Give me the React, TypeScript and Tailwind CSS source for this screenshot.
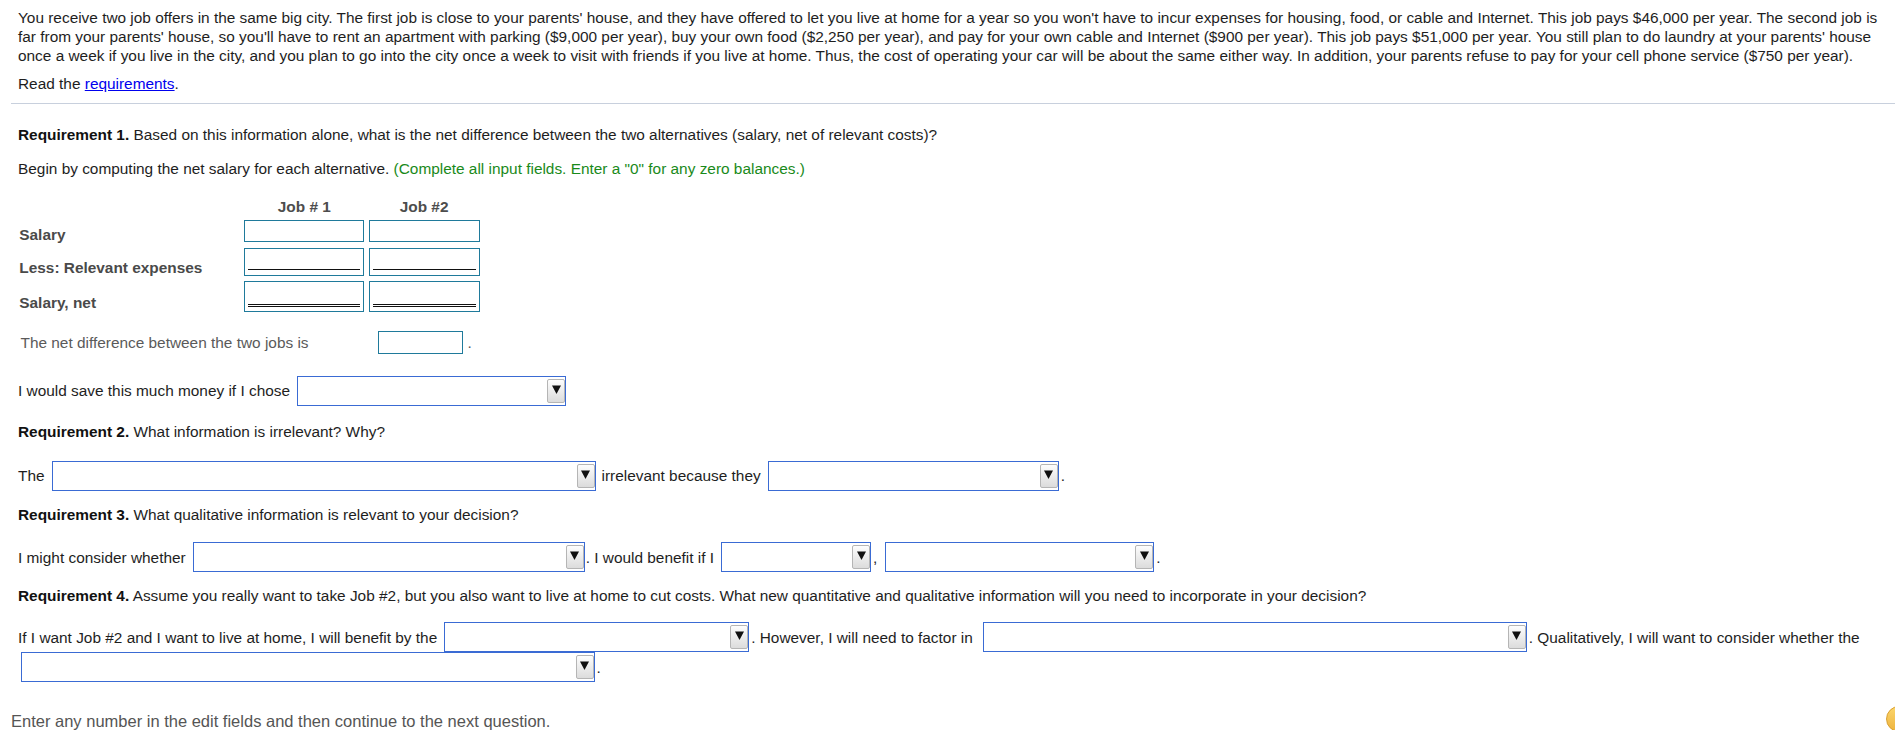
import clsx from "clsx";

const labelClass = "self-end pl-[1.3px] font-bold text-[#4a4a4a]";
const cellClass = "border border-[#1f7a9b] bg-white";

// Dropdown box: blue frame with the little grey arrow button on the right.
function Select({ w, className }: { w: string; className?: string }) {
  return (
    <div
      className={clsx(
        "flex h-[30px] shrink-0 items-start justify-end border border-[#3a6bd4] bg-white pt-[2px]",
        w,
        className,
      )}
    >
      <div className="flex h-[24px] w-[18px] justify-center rounded-[2px] border border-[#b5b5b5] bg-gradient-to-b from-[#fdfdfd] to-[#dcdcdc] pt-[5px]">
        <svg width="9" height="9" viewBox="0 0 9 9">
          <path d="M0 0.5H9L4.5 9Z" fill="#111" />
        </svg>
      </div>
    </div>
  );
}

function Requirement({
  n,
  children,
  className,
}: {
  n: number;
  children: React.ReactNode;
  className?: string;
}) {
  return (
    <p className={className}>
      <b className="text-[#111]">Requirement {n}.</b> {children}
    </p>
  );
}

export default function App() {
  return (
    <div className="relative h-[730px] overflow-hidden bg-white pl-[11px] font-['Liberation_Sans',Arial,sans-serif] text-[15.4px] leading-[19.2px] text-[#1e1e1e]">
      <div className="pl-[7px] pr-[2px] pt-[7.5px]">
        <p>
          You receive two job offers in the same big city. The first job is
          close to your parents' house, and they have offered to let you live
          at home for a year so you won't have to incur expenses for housing,
          food, or cable and Internet. This job pays $46,000 per year. The
          second job is far from your parents' house, so you'll have to rent an
          apartment with parking ($9,000 per year), buy your own food ($2,250
          per year), and pay for your own cable and Internet ($900 per year).
          This job pays $51,000 per year. You still plan to do laundry at your
          parents' house once a week if you live in the city, and you plan to
          go into the city once a week to visit with friends if you live at
          home. Thus, the cost of operating your car will be about the same
          either way. In addition, your parents refuse to pay for your cell
          phone service ($750 per year).
        </p>
        <p className="mt-[9.3px]">
          Read the{" "}
          <a href="#" className="text-[#0000ee] underline">
            requirements
          </a>
          .
        </p>
      </div>

      <div className="mt-[9.5px] h-px bg-[#c8d0dd]" />

      <div className="pl-[7px]">
        <Requirement n={1} className="mt-[21px]">
          Based on this information alone, what is the net difference between
          the two alternatives (salary, net of relevant costs)?
        </Requirement>
        <p className="mt-[15px]">
          Begin by computing the net salary for each alternative.{" "}
          <span className="text-[#1a8a1a]">
            (Complete all input fields. Enter a "0" for any zero balances.)
          </span>
        </p>

        <div className="mt-[18.3px] grid grid-cols-[222px_120px_111px] gap-x-[4.3px] font-bold text-[#4d4d4d]">
          <div />
          <div className="text-center">Job # 1</div>
          <div className="text-center">Job #2</div>
        </div>
        <div className="mt-[4.2px] grid h-[22px] grid-cols-[222px_120px_111px] gap-x-[4.3px]">
          <div className={clsx(labelClass, "mb-[-2.3px]")}>Salary</div>
          <div className={cellClass} />
          <div className={cellClass} />
        </div>
        <div className="mt-[6px] grid h-[27.4px] grid-cols-[222px_120px_111px] gap-x-[4.3px]">
          <div className={clsx(labelClass, "mb-[-1.6px]")}>
            Less: Relevant expenses
          </div>
          <div className={clsx(cellClass, "flex flex-col justify-end px-[3px] pb-[4.4px]")}>
            <div className="h-px bg-[#111]" />
          </div>
          <div className={clsx(cellClass, "flex flex-col justify-end px-[3px] pb-[4.4px]")}>
            <div className="h-px bg-[#111]" />
          </div>
        </div>
        <div className="mt-[5.3px] grid h-[30.7px] grid-cols-[222px_120px_111px] gap-x-[4.3px]">
          <div className={clsx(labelClass, "mb-[-1px]")}>Salary, net</div>
          <div className={clsx(cellClass, "flex flex-col justify-end px-[3px] pb-[3.4px]")}>
            <div className="h-[3.6px] border-y border-[#111]" />
          </div>
          <div className={clsx(cellClass, "flex flex-col justify-end px-[3px] pb-[3.4px]")}>
            <div className="h-[3.6px] border-y border-[#111]" />
          </div>
        </div>

        <div className="mt-[19.3px] flex h-[23px] items-center text-[#5a5a5a]">
          <span className="w-[360px] pl-[2.5px]">
            The net difference between the two jobs is
          </span>
          <div className={clsx(cellClass, "h-[23px] w-[85px]")} />
          <span className="ml-[4.5px]">.</span>
        </div>

        <div className="mt-[22px] flex items-center">
          <span>I would save this much money if I chose</span>
          <Select w="w-[269px]" className="ml-[7px]" />
        </div>

        <Requirement n={2} className="mt-[15.7px]">
          What information is irrelevant? Why?
        </Requirement>
        <div className="mt-[20px] flex items-center">
          <span>The</span>
          <Select w="w-[544px]" className="ml-[7px]" />
          <span className="ml-[6px]">irrelevant because they</span>
          <Select w="w-[291px]" className="ml-[7px]" />
          <span className="ml-[2px]">.</span>
        </div>

        <Requirement n={3} className="mt-[14.7px]">
          What qualitative information is relevant to your decision?
        </Requirement>
        <div className="mt-[17.8px] flex items-center">
          <span>I might consider whether</span>
          <Select w="w-[392px]" className="ml-[7px]" />
          <span className="ml-[1px]">. I would benefit if I</span>
          <Select w="w-[150px]" className="ml-[7px]" />
          <span className="ml-[2px]">,</span>
          <Select w="w-[269px]" className="ml-[8px]" />
          <span className="ml-[2px]">.</span>
        </div>

        <Requirement n={4} className="mt-[13.7px]">
          Assume you really want to take Job #2, but you also want to live at
          home to cut costs. What new quantitative and qualitative information
          will you need to incorporate in your decision?
        </Requirement>
        <div className="mt-[17px] flex items-center">
          <span>
            If I want Job #2 and I want to live at home, I will benefit by the
          </span>
          <Select w="w-[305px]" className="ml-[7px]" />
          <span className="ml-[2px]">. However, I will need to factor in</span>
          <Select w="w-[544px]" className="ml-[10px]" />
          <span className="ml-[2px]">
            . Qualitatively, I will want to consider whether the
          </span>
        </div>
        <div className="flex items-center">
          <Select w="w-[574px]" className="ml-[2.6px]" />
          <span className="ml-[2px]">.</span>
        </div>
      </div>

      <p className="mt-[29.5px] text-[16.5px] leading-[19px] text-[#555]">
        Enter any number in the edit fields and then continue to the next
        question.
      </p>

      <div className="absolute left-[1886px] top-[706px] h-[26px] w-[26px] rounded-full border border-[#d9a030] bg-gradient-to-b from-[#fbd56a] to-[#eeb43e]" />
    </div>
  );
}
